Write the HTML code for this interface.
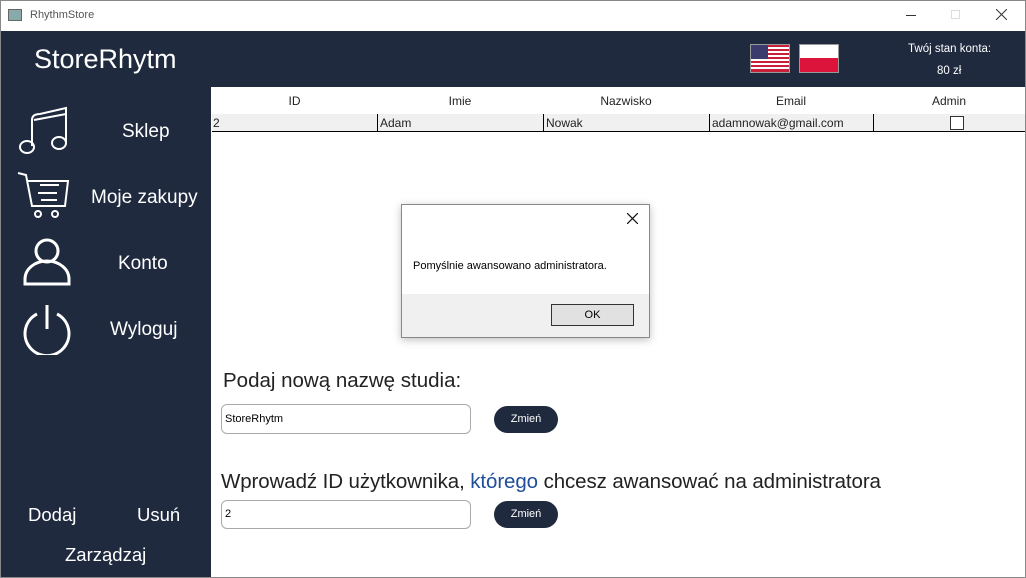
<!DOCTYPE html>
<html><head><meta charset="utf-8"><style>
*{margin:0;padding:0;box-sizing:border-box}
body{width:1026px;height:578px;overflow:hidden;background:#fff;font-family:"Liberation Sans",sans-serif;position:relative}
.a{position:absolute}
.nav{color:#fff;font-size:19px;white-space:nowrap}
.th{position:absolute;top:94px;font-size:12px;color:#222;text-align:center}
.td{position:absolute;top:114px;height:18px;font-size:12px;color:#222;padding-left:2px;border-left:1px solid #000;line-height:18px}
.inp{position:absolute;left:221px;width:250px;border:1px solid #aaa;border-radius:6px;font-size:11px;padding-left:3px;background:#fff}
.btn{position:absolute;left:494px;width:64px;height:27px;border-radius:14px;background:#1f2a3f;color:#fff;font-size:11px;text-align:center;line-height:27px}
</style></head><body>
<div class="a" style="left:0;top:0;width:1026px;height:578px;border:1px solid #888"></div>
<div class="a" style="left:8px;top:9px;width:14px;height:12px;border:1px solid #666;background:#8aa"></div>
<div class="a" style="left:30px;top:9px;font-size:11px;color:#555">RhythmStore</div>
<div class="a" style="left:906px;top:15px;width:10px;height:1px;background:#333"></div>
<div class="a" style="left:951px;top:10px;width:9px;height:9px;border:1px solid #ddd"></div>
<svg class="a" style="left:996px;top:9px" width="11" height="11" stroke="#333" stroke-width="1"><path d="M0 0L11 11M11 0L0 11"/></svg>
<div class="a" style="left:1px;top:31px;width:1024px;height:56px;background:#1f2a3f"></div>
<div class="a" style="left:1px;top:87px;width:210px;height:490px;background:#1f2a3f"></div>
<div class="a nav" style="left:34px;top:44px;font-size:27px">StoreRhytm</div>
<svg class="a" style="left:750px;top:44px" width="40" height="29" viewBox="0 0 40 29"><rect width="40" height="29" fill="#999"/><g transform="translate(1,1)"><rect width="38" height="27" fill="#fff"/><g fill="#c8203a"><rect y="0" width="38" height="2"/><rect y="4" width="38" height="2"/><rect y="8" width="38" height="2"/><rect y="12" width="38" height="2"/><rect y="16" width="38" height="2"/><rect y="20" width="38" height="2"/><rect y="24" width="38" height="3"/></g><rect width="17" height="14" fill="#3c3b6e"/></g></svg>
<svg class="a" style="left:799px;top:44px" width="40" height="29"><rect width="40" height="29" fill="#999"/><rect x="1" y="1" width="38" height="13" fill="#fff"/><rect x="1" y="14" width="38" height="14" fill="#dc143c"/></svg>
<div class="a" style="left:908px;top:43px;color:#fff;font-size:11.5px">Twój stan konta:</div>
<div class="a" style="left:937px;top:65px;color:#fff;font-size:11.5px">80 zł</div>
<svg class="a" style="left:18px;top:106px" width="52" height="50" fill="none" stroke="#fff" stroke-width="2"><path d="M14 40V14Q14 8 22 8L48 2V36M16 14L48 8"/><ellipse cx="9" cy="41" rx="7" ry="6"/><ellipse cx="41" cy="37" rx="7" ry="6"/></svg>
<svg class="a" style="left:17px;top:172px" width="54" height="48" fill="none" stroke="#fff" stroke-width="2"><path d="M1 1L9 3L15 34H48L51 9H11M23 13H42M21 21H40M24 28H40"/><circle cx="21" cy="42" r="3"/><circle cx="38" cy="42" r="3"/></svg>
<svg class="a" style="left:23px;top:238px" width="50" height="48" fill="none" stroke="#fff" stroke-width="3"><circle cx="24" cy="13" r="11"/><path d="M2 46V41A22 18 0 0 1 46 41V46Z"/></svg>
<svg class="a" style="left:22px;top:303px" width="50" height="52" fill="none" stroke="#fff" stroke-width="3"><path d="M25 2V26"/><path d="M15 11A22 22 0 1 0 35 11"/></svg>
<div class="a nav" style="left:122px;top:121px">Sklep</div>
<div class="a nav" style="left:91px;top:187px">Moje zakupy</div>
<div class="a nav" style="left:118px;top:253px">Konto</div>
<div class="a nav" style="left:110px;top:319px">Wyloguj</div>
<div class="a nav" style="left:28px;top:504px;font-size:18.5px">Dodaj</div>
<div class="a nav" style="left:137px;top:504px;font-size:18.5px">Usuń</div>
<div class="a nav" style="left:65px;top:544px;font-size:18.5px">Zarządzaj</div>
<div class="th" style="left:212px;width:165px">ID</div>
<div class="th" style="left:377px;width:166px">Imie</div>
<div class="th" style="left:543px;width:166px">Nazwisko</div>
<div class="th" style="left:709px;width:164px">Email</div>
<div class="th" style="left:873px;width:152px">Admin</div>
<div class="a" style="left:212px;top:114px;width:813px;height:18px;background:#f0f0f0"></div>
<div class="td" style="left:211px;width:166px;border-left:none">2</div>
<div class="td" style="left:377px;width:166px">Adam</div>
<div class="td" style="left:543px;width:166px">Nowak</div>
<div class="td" style="left:709px;width:164px">adamnowak@gmail.com</div>
<div class="td" style="left:873px;width:152px"></div>
<div class="a" style="left:950px;top:116px;width:14px;height:14px;border:1px solid #333;background:#fff"></div>
<div class="a" style="left:212px;top:131px;width:813px;height:1px;background:#000"></div>
<div class="a" style="left:401px;top:204px;width:249px;height:134px;border:1px solid #888;background:#fff;box-shadow:0 2px 8px rgba(0,0,0,.25)"></div>
<div class="a" style="left:402px;top:294px;width:247px;height:43px;background:#f0f0f0"></div>
<svg class="a" style="left:627px;top:213px" width="11" height="11" stroke="#111" stroke-width="1.2"><path d="M0 0L11 11M11 0L0 11"/></svg>
<div class="a" style="left:413px;top:260px;font-size:11px;color:#000">Pomyślnie awansowano administratora.</div>
<div class="a" style="left:551px;top:304px;width:83px;height:22px;border:1px solid #333;background:#e1e1e1;font-size:11px;text-align:center;line-height:20px">OK</div>
<div class="a" style="left:223px;top:369px;font-size:20.5px;color:#222">Podaj nową nazwę studia:</div>
<div class="inp" style="top:404px;height:30px;line-height:28px">StoreRhytm</div>
<div class="btn" style="top:406px">Zmień</div>
<div class="a" style="left:221px;top:470px;font-size:20.5px;color:#222;white-space:nowrap;letter-spacing:-0.1px">Wprowadź ID użytkownika, <span style="color:#1f4e9a">którego</span> chcesz awansować na administratora</div>
<div class="inp" style="top:500px;height:29px;line-height:27px">2</div>
<div class="btn" style="top:501px">Zmień</div>
</body></html>
